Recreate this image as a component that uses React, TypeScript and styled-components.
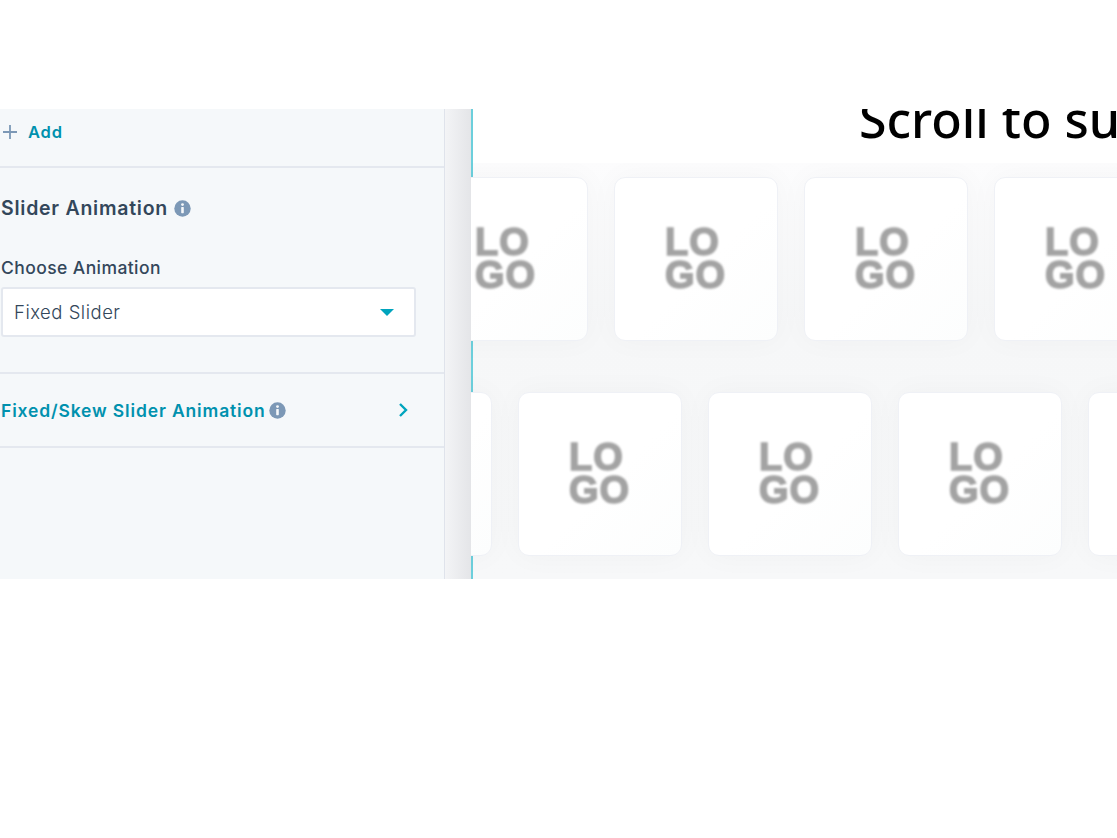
import React from "react";
import styled, { createGlobalStyle } from "styled-components";

const Global = createGlobalStyle`
  html, body { margin: 0; padding: 0; background: #fff; }
  body { font-family: "Inter", "Noto Sans", sans-serif; }
  * { box-sizing: border-box; }
`;

const Page = styled.div`
  width: 1117px;
  height: 838px;
  padding-top: 109px;
  overflow: hidden;
`;

const Frame = styled.div`
  display: flex;
  height: 470px;
`;

const Sidebar = styled.aside`
  width: 445px;
  flex: none;
  background: #f5f8fa;
  border-right: 1px solid #dfe3eb;
  color: #33475b;
`;

const AddRow = styled.div`
  height: 59px;
  display: flex;
  align-items: center;
  gap: 10px;
  padding: 0 0 12px 2px;
  border-bottom: 2px solid #e4e8ef;
`;

const AddLabel = styled.span`
  color: #0091ae;
  font-size: 16.5px;
  font-weight: 600;
  letter-spacing: 0.8px;
`;

const Section = styled.section`
  padding: 28px 28px 35px 1px;
  border-bottom: 2px solid #e4e8ef;
`;

const SectionTitle = styled.h3`
  display: flex;
  align-items: center;
  gap: 6px;
  margin: 0 0 36px;
  height: 24px;
  font-size: 19.5px;
  font-weight: 600;
  letter-spacing: 0.75px;
`;

const FieldLabel = styled.label`
  display: block;
  font-size: 17.5px;
  font-weight: 500;
  letter-spacing: 0.42px;
  line-height: 24px;
  margin-bottom: 7px;
`;

const Select = styled.div`
  height: 50px;
  background: #fff;
  border: 2px solid #e4e8ef;
  border-radius: 3px;
  display: flex;
  align-items: center;
  justify-content: space-between;
  padding: 0 20px 0 11px;
  font-size: 18.5px;
  font-weight: 300;
  letter-spacing: 0.5px;
`;

const Caret = styled.span`
  width: 0;
  height: 0;
  border-left: 7px solid transparent;
  border-right: 7px solid transparent;
  border-top: 7px solid #00a4bd;
`;

const AccordionRow = styled.div`
  height: 74px;
  display: flex;
  align-items: center;
  padding: 0 36px 0 1px;
  border-bottom: 2px solid #e4e8ef;
`;

const AccordionTitle = styled.span`
  display: flex;
  align-items: center;
  gap: 3px;
  flex: 1;
  color: #0091ae;
  font-size: 17.5px;
  font-weight: 600;
  letter-spacing: 0.85px;
`;

const Gutter = styled.div`
  width: 26px;
  flex: none;
  background: linear-gradient(to right, #f3f4f6, #e4e5e8);
`;

const Main = styled.main`
  position: relative;
  flex: 1;
  min-width: 0;
  overflow: hidden;
  background: #fff;
  &::before {
    content: "";
    position: absolute;
    inset: 0 auto 0 0;
    width: 2px;
    background: #6ccfdc;
    z-index: 1;
  }
`;

const HeadingBar = styled.div`
  height: 54px;
  overflow: hidden;
  padding-left: 388px;
`;

const Heading = styled.h1`
  margin: -24px 0 0;
  font-family: "Noto Sans", sans-serif;
  font-size: 50px;
  font-weight: 500;
  line-height: 68px;
  white-space: nowrap;
  color: #000;
`;

const Band = styled.div`
  height: 416px;
  overflow: hidden;
  background: linear-gradient(to bottom, #fcfcfd, #f6f7f8 40%, #f7f8f9);
  padding-top: 14px;
  display: flex;
  flex-direction: column;
  gap: 51px;
`;

const LogoRow = styled.div<{ $offset: number }>`
  position: relative;
  z-index: 2;
  display: flex;
  gap: 26px;
  margin-left: ${(p) => p.$offset}px;
`;

const LogoCard = styled.div`
  width: 164px;
  height: 164px;
  flex: none;
  display: flex;
  align-items: center;
  justify-content: center;
  background: linear-gradient(135deg, #fff 55%, #fcfdfd);
  border: 1px solid #eff1f6;
  border-radius: 11px;
  box-shadow: 0 0 30px rgba(40, 50, 60, 0.03);
`;

const LogoText = styled.div`
  font-family: "Liberation Sans", Arial, sans-serif;
  font-size: 38px;
  font-weight: 700;
  line-height: 33px;
  letter-spacing: 1px;
  color: #a3a3a3;
  width: 62px;
  word-break: break-all;
  -webkit-text-stroke: 1.5px #a3a3a3;
  filter: blur(0.8px);
`;

const InfoIcon = () => (
  <svg width="17" height="17" viewBox="0 0 17 17" aria-hidden="true">
    <circle cx="8.5" cy="8.5" r="8.2" fill="#7c98b6" />
    <circle cx="8.5" cy="4.6" r="1.4" fill="#f5f8fa" />
    <rect x="7.2" y="7" width="2.6" height="6.2" rx="0.6" fill="#f5f8fa" />
  </svg>
);

const PlusIcon = () => (
  <svg width="16" height="16" viewBox="0 0 16 16" aria-hidden="true">
    <path d="M8 1v14M1 8h14" stroke="#7c98b6" strokeWidth="1.8" fill="none" />
  </svg>
);

const ChevronIcon = () => (
  <svg width="10" height="16" viewBox="0 0 10 16" aria-hidden="true">
    <path d="M2 2l6 6-6 6" stroke="#00a4bd" strokeWidth="2.4" fill="none" />
  </svg>
);

const LogoRowItems = ({ offset, count }: { offset: number; count: number }) => (
  <LogoRow $offset={offset}>
    {Array.from({ length: count }, (_, i) => (
      <LogoCard key={i}>
        <LogoText>LOGO</LogoText>
      </LogoCard>
    ))}
  </LogoRow>
);

export default function App() {
  return (
    <Page>
      <Global />
      <Frame>
        <Sidebar>
          <AddRow>
            <PlusIcon />
            <AddLabel>Add</AddLabel>
          </AddRow>
          <Section>
            <SectionTitle>
              Slider Animation <InfoIcon />
            </SectionTitle>
            <FieldLabel>Choose Animation</FieldLabel>
            <Select>
              Fixed Slider
              <Caret />
            </Select>
          </Section>
          <AccordionRow>
            <AccordionTitle>
              Fixed/Skew Slider Animation <InfoIcon />
            </AccordionTitle>
            <ChevronIcon />
          </AccordionRow>
        </Sidebar>
        <Gutter />
        <Main>
          <HeadingBar>
            <Heading>Scroll to survey</Heading>
          </HeadingBar>
          <Band>
            <LogoRowItems offset={-47} count={4} />
            <LogoRowItems offset={-143} count={5} />
          </Band>
        </Main>
      </Frame>
    </Page>
  );
}
